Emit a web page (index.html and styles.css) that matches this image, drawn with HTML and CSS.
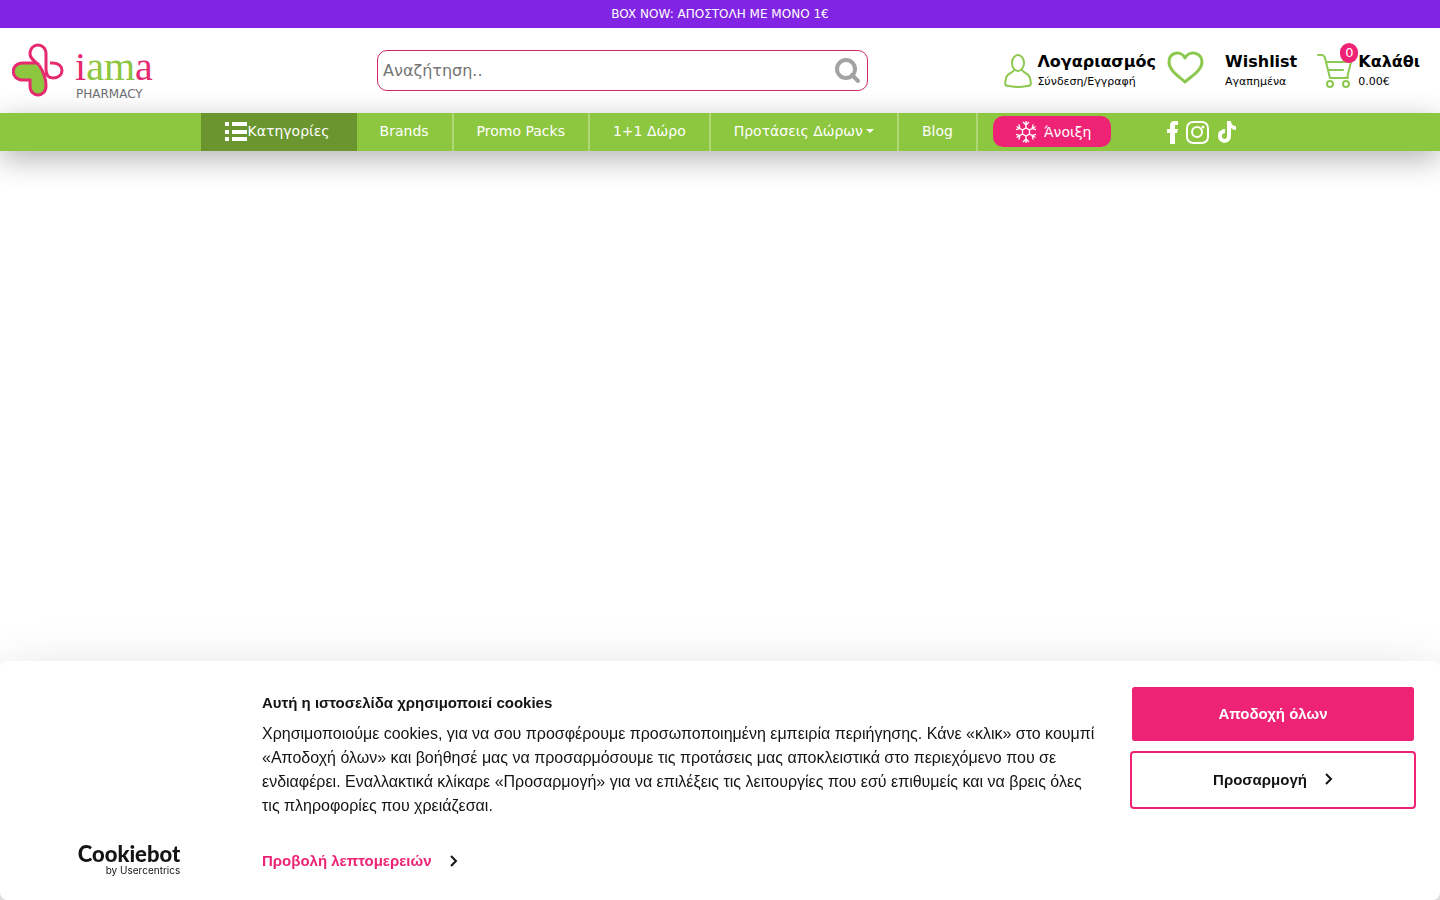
FILE: index.html
```html
<!DOCTYPE html>
<html lang="el">
<head>
  <meta charset="UTF-8">
  <meta name="viewport" content="width=device-width, initial-scale=1">
  <title>iama Pharmacy</title>
  <link rel="stylesheet" href="styles.css">
</head>
<body>
  <div class="promo">BOX NOW: ΑΠΟΣΤΟΛΗ ΜΕ ΜΟΝΟ 1€</div>

  <header class="header">
    <a class="logo" href="#">
      <svg width="156" height="60" viewBox="0 -2 156 60">
        <path d="M19 44V37H11C-2 37 -2 21 11 21H24C30 27 34 34 34 42C34 54 19 54 19 44Z" fill="#8dc63f"/>
        <path d="M27 22C21 17 18 15 18 11C18 -1 34 -1 34 11V26C34 33 37 35 41 35C53 35 53 20 41 20H38M25 20H11C-2 20 -2 37 11 37H18V43C18 55 34 55 34 43C34 34 31 28 27 22" fill="none" stroke="#e52a6f" stroke-width="3"/>
        <text class="logo-name" x="63" y="37"><tspan class="logo-pink">i</tspan><tspan class="logo-green">am</tspan><tspan class="logo-pink">a</tspan></text>
        <text class="logo-sub" x="64" y="55">PHARMACY</text>
      </svg>
    </a>

    <form class="search">
      <input class="search-input" type="search" placeholder="Αναζήτηση.." aria-label="Αναζήτηση">
      <button class="search-btn" type="button" aria-label="Αναζήτηση">
        <svg width="27" height="28" viewBox="0 0 27 28" fill="none" stroke="#a3a3a3">
          <circle cx="12" cy="12" r="9" stroke-width="4"/>
          <path d="M18 18L24 24" stroke-width="4" stroke-linecap="round"/>
        </svg>
      </button>
    </form>

    <div class="actions">
      <a class="action" href="#">
        <svg width="28" height="34" viewBox="0 0 28 34" fill="none" stroke="#8dc850" stroke-width="2">
          <ellipse cx="14" cy="9" rx="6" ry="8"/>
          <path d="M10 16C9 19 3 19 2 24C1 29 0 32 5 32C10 33 18 33 23 32C28 32 27 29 26 24C25 19 19 19 18 16"/>
        </svg>
        <span class="action-text"><b>Λογαριασμός</b><small>Σύνδεση/Εγγραφή</small></span>
      </a>
      <a class="action action-wish" href="#">
        <svg class="heart" width="38" height="34" viewBox="0 0 38 34" fill="none" stroke="#8dc850" stroke-width="3" stroke-linejoin="round">
          <path d="M18 31C13 26 2 20 2 11C2 1 14 -1 18 7C22 -1 35 1 35 11C35 20 23 26 18 31Z"/>
        </svg>
        <span class="action-text"><b>Wishlist</b><small>Αγαπημένα</small></span>
      </a>
      <a class="action action-cart" href="#">
        <span class="cart">
          <svg width="36" height="36" viewBox="0 0 36 36" fill="none" stroke="#8dc850" stroke-width="2" stroke-linecap="round" stroke-linejoin="round">
            <path d="M1 2H5C7 2 7 3 8 5L13 25H31M9 9H34L31 21C31 24 30 25 28 25M11 17H26"/>
            <circle cx="13" cy="31" r="3"/>
            <circle cx="29" cy="31" r="3"/>
          </svg>
          <span class="cart-count">0</span>
        </span>
        <span class="action-text"><b>Καλάθι</b><small>0.00€</small></span>
      </a>
    </div>
  </header>

  <nav class="nav">
    <a class="nav-link nav-categories" href="#">
      <svg width="23" height="20" viewBox="0 0 23 20" fill="#fff">
        <path d="M0 1H4V5H0zM7 1H22V5H7zM0 9H4V13H0zM7 9H22V13H7zM0 16H4V20H0zM7 16H22V20H7z"/>
      </svg>Κατηγορίες
    </a>
    <a class="nav-link" href="#">Brands</a>
    <a class="nav-link" href="#">Promo Packs</a>
    <a class="nav-link" href="#">1+1 Δώρο</a>
    <a class="nav-link nav-drop" href="#">Προτάσεις Δώρων</a>
    <a class="nav-link" href="#">Blog</a>
    <a class="nav-season" href="#">
      <svg width="20" height="22" viewBox="0 0 20 22" fill="none" stroke="#fff" stroke-width="1.3">
        <path d="M10 7L13.500 9V13L10 15L6.500 13V9Z"/>
        <path id="arm" d="M10 7V0M7 1L10 4L13 1"/>
        <use href="#arm" transform="rotate(60 10 11)"/>
        <use href="#arm" transform="rotate(120 10 11)"/>
        <use href="#arm" transform="rotate(180 10 11)"/>
        <use href="#arm" transform="rotate(240 10 11)"/>
        <use href="#arm" transform="rotate(300 10 11)"/>
      </svg>
      Άνοιξη
    </a>
    <div class="social">
      <a href="#" aria-label="Facebook">
        <svg width="12" height="24" viewBox="0 0 12 24" fill="#fff"><path d="M3 24V13H0V9H3V6C3 2 5 1 8 1H11V5H9C8 5 8 5 8 7V9H11L10 13H8V24Z"/></svg>
      </a>
      <a href="#" aria-label="Instagram">
        <svg width="24" height="24" viewBox="0 0 24 24" fill="none" stroke="#fff" stroke-width="2">
          <rect x="2" y="2" width="21" height="21" rx="6"/>
          <circle cx="12" cy="12" r="5"/>
          <circle cx="18" cy="7" r="1.500" fill="#fff" stroke="none"/>
        </svg>
      </a>
      <a class="tiktok" href="#" aria-label="TikTok">
        <svg width="18" height="22" viewBox="0 0 18 22" fill="#fff"><path d="M9 0H13C13 3 15 5 18 5V9C16 9 14 8 13 7V15C13 24 0 24 0 15C0 10 4 8 7 8V12C5 12 4 13 4 15C4 19 9 19 9 15Z"/></svg>
      </a>
    </div>
  </nav>

  <main class="content"></main>

  <section class="cookies" role="dialog" aria-labelledby="cookies-title">
    <a class="cookiebot" href="#">
      <span class="cookiebot-name">Cookiebot</span>
      <span class="cookiebot-by">by Usercentrics</span>
    </a>
    <div class="cookies-body">
      <h2 id="cookies-title">Αυτή η ιστοσελίδα χρησιμοποιεί cookies</h2>
      <p>Χρησιμοποιούμε cookies, για να σου προσφέρουμε προσωποποιημένη εμπειρία περιήγησης. Κάνε «κλικ» στο κουμπί «Αποδοχή όλων» και βοήθησέ μας να προσαρμόσουμε τις προτάσεις μας αποκλειστικά στο περιεχόμενο που σε ενδιαφέρει. Εναλλακτικά κλίκαρε «Προσαρμογή» για να επιλέξεις τις λειτουργίες που εσύ επιθυμείς και να βρεις όλες τις πληροφορίες που χρειάζεσαι.</p>
      <a class="details" href="#">Προβολή λεπτομερειών
        <svg width="8" height="12" viewBox="0 0 8 12" fill="none" stroke="#141414" stroke-width="2"><path d="M1 1L6 6L1 11"/></svg>
      </a>
    </div>
    <div class="cookies-buttons">
      <button class="btn btn-accept" type="button">Αποδοχή όλων</button>
      <button class="btn btn-custom" type="button">Προσαρμογή
        <svg width="8" height="12" viewBox="0 0 8 12" fill="none" stroke="#141414" stroke-width="2"><path d="M1 1L6 6L1 11"/></svg>
      </button>
    </div>
  </section>
</body>
</html>
```

FILE: styles.css
```css
* {
  box-sizing: border-box;
}
body {
  display: flex;
  flex-direction: column;
  min-height: 100vh;
  margin: 0;
  font-family: "DejaVu Sans", sans-serif;
  color: #000;
  background-color: #fff;
}
a {
  color: inherit;
  text-decoration: none;
}
svg {
  display: block;
  flex-shrink: 0;
}
.promo {
  background-color: #8224e3;
  color: #fff;
  font-size: 12px;
  line-height: 28px;
  text-align: center;
}
.content {
  flex: 1;
}

/* header */
.header {
  display: grid;
  grid-template-columns: 365fr 491fr 552fr;
  align-items: center;
  padding: 0 20px 0 12px;
  height: 85px;
}
.logo-name {
  font-family: "Liberation Serif", serif;
  font-size: 40px;
}
.logo-pink {
  fill: #e52a6f;
}
.logo-green {
  fill: #8dc63f;
}
.logo-sub {
  font-size: 12px;
  fill: #6d6e70;
}
.search {
  display: flex;
  align-items: center;
  height: 41px;
  padding: 0 6px 0 5px;
  border: 1px solid #d6246c;
  border-radius: 10px;
  background-color: #fff;
}
.search-input {
  flex: 1;
  min-width: 0;
  padding: 0;
  border: 0;
  outline: 0;
  background: none;
  font-family: inherit;
  font-size: 16px;
}
.search-input::placeholder {
  color: #757575;
}
.search-btn {
  padding: 0;
  border: 0;
  background: none;
  cursor: pointer;
}
.actions {
  display: flex;
  justify-content: flex-end;
  gap: 11px;
}
.action {
  display: flex;
  align-items: center;
  gap: 5px;
}
.action-wish {
  gap: 20px;
}
.heart {
  margin-bottom: 6px;
}
.action-cart {
  margin-left: 9px;
}
.action-text {
  display: flex;
  flex-direction: column;
}
.action-text b {
  font-size: 16px;
  line-height: 22px;
}
.action-text small {
  font-size: 11px;
  line-height: 18px;
}
.cart {
  position: relative;
}
.cart-count {
  position: absolute;
  top: -10px;
  right: -5px;
  width: 18px;
  border-radius: 10px;
  background-color: #ee2375;
  color: #fff;
  font-size: 13px;
  line-height: 20px;
  text-align: center;
}

/* menu */
.nav {
  position: relative;
  z-index: 1;
  display: flex;
  justify-content: center;
  height: 38px;
  padding-right: 3px;
  background-color: #8dc63f;
  color: #fff;
  font-size: 14px;
  box-shadow: 0 8px 30px rgba(0, 0, 0, 0.3);
}
.nav-link {
  display: flex;
  align-items: center;
  padding: 0 23px 2px;
  border-right: 2px solid #aed876;
  white-space: nowrap;
}
.nav-categories {
  padding: 0 27px 2px 24px;
  border-right: 0;
  background-color: #6b962f;
}
.nav-drop::after {
  content: "";
  margin-left: 3px;
  border: 4px solid transparent;
  border-top-color: #fff;
  border-bottom: 0;
}
.nav-season {
  display: flex;
  align-items: center;
  gap: 8px;
  margin: 3px 56px 4px 15px;
  padding: 0 20px 0 23px;
  border-radius: 10px;
  background-color: #ee2375;
}
.social {
  display: flex;
  align-items: center;
  gap: 6px;
}
.tiktok {
  margin-left: 3px;
}

/* cookie banner */
.cookies {
  position: fixed;
  left: 0;
  right: 0;
  bottom: 0;
  z-index: 2;
  display: grid;
  grid-template-columns: 238px 1fr 286px;
  column-gap: 24px;
  padding: 24px 24px 24px 0;
  border-radius: 8px;
  background-color: #fff;
  color: #141414;
  font-family: "Liberation Sans", sans-serif;
  font-size: 15px;
  line-height: 24px;
  box-shadow: 0 32px 68px rgba(0, 0, 0, 0.3);
}
.cookiebot {
  align-self: end;
  justify-self: center;
  display: flex;
  flex-direction: column;
  align-items: flex-end;
  margin-left: 20px;
}
.cookiebot-name {
  font-family: Lato, sans-serif;
  font-size: 22px;
  font-weight: 900;
  line-height: 20px;
}
.cookiebot-by {
  font-family: Inter, sans-serif;
  font-size: 10px;
  line-height: 12px;
}
.cookies-body {
  padding-bottom: 3px;
}
.cookies-body h2 {
  margin: 6px 0 7px;
  font-size: 15px;
  line-height: 24px;
}
.cookies-body p {
  margin: 0 0 31px;
  padding-right: 8px;
  font-size: 16px;
}
.details {
  display: inline-flex;
  align-items: center;
  gap: 18px;
  color: #ee2375;
  font-weight: bold;
}
.cookies-buttons {
  display: flex;
  flex-direction: column;
  gap: 8px;
}
.btn {
  display: flex;
  align-items: center;
  justify-content: center;
  gap: 18px;
  height: 58px;
  padding: 0 6px 2px;
  border: 2px solid #ee2375;
  border-radius: 4px;
  background-color: #fff;
  color: #141414;
  font-family: inherit;
  font-size: 15px;
  font-weight: bold;
  cursor: pointer;
}
.btn-accept {
  border-color: #fff;
  background-color: #ee2375;
  background-clip: padding-box;
  color: #fff;
}
```
